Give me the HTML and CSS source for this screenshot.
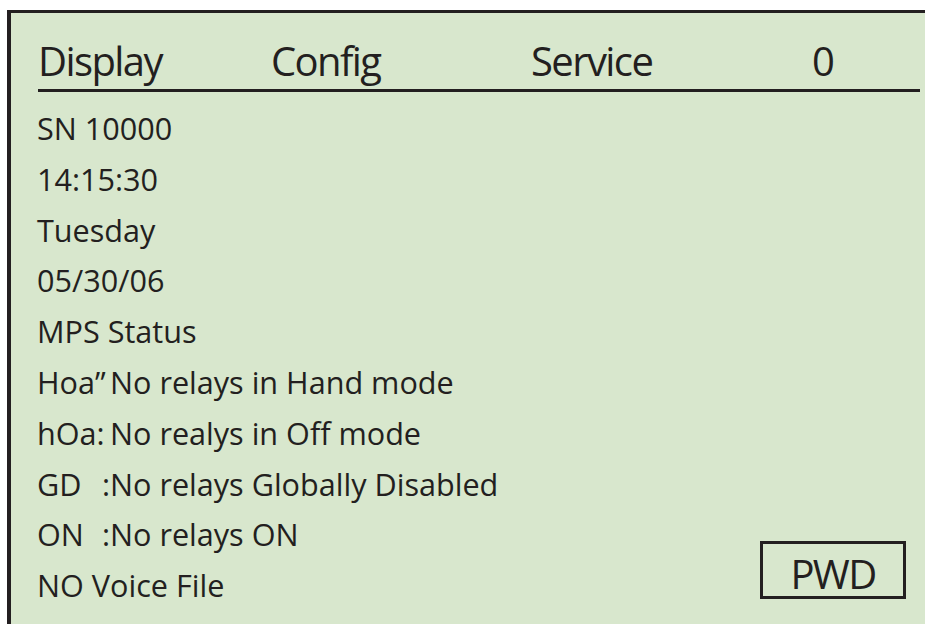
FILE: index.html
```html
<!DOCTYPE html>
<html>
<head>
  <title>MPS Display</title>
  <link rel="stylesheet" href="styles.css">
</head>
<body>

<div class="panel">
  <div class="tabs">
    <span class="tab">Display</span>
    <span class="tab">Config</span>
    <span class="tab">Service</span>
    <span class="tab">0</span>
  </div>

  <div class="lines">
    <div class="line">SN 10000</div>
    <div class="line">14:15:30</div>
    <div class="line">Tuesday</div>
    <div class="line">05/30/06</div>
    <div class="line">MPS Status</div>
    <div class="line"><span class="key">Hoa&rdquo;</span>No relays in Hand mode</div>
    <div class="line"><span class="key">hOa:</span>No realys in Off mode</div>
    <div class="line"><span class="key split">GD<span>:</span></span>No relays Globally Disabled</div>
    <div class="line"><span class="key split">ON<span>:</span></span>No relays ON</div>
    <div class="line">NO Voice File</div>
    <div class="pwd">PWD</div>
  </div>
</div>

</body>
</html>
```

FILE: styles.css
```css
body{
margin: 0;
background-color: white;
color: #231f20;
font-family: "Open Sans", "Noto Sans", sans-serif;
}
.panel{
box-sizing: border-box;
height: 614px;
margin: 10px 0 0 7px;
padding: 0 5px 0 0;
border-top: 3px solid #231f20;
border-left: 4px solid #231f20;
background-color: #d8e7cd;
}
.tabs{
display: grid;
grid-template-columns: 233px 260px 281px auto;
margin-left: 27px;
padding: 27px 0 7px 0;
border-bottom: 3px solid #231f20;
font-size: 40px;
letter-spacing: -1.6px;
line-height: 42px;
}
.lines{
display: grid;
grid-template-columns: 1fr auto;
grid-auto-rows: 50.8px;
margin: 11px 14px 0 26px;
font-size: 30.6px;
line-height: 50.8px;
}
.line{
grid-column: 1;
white-space: nowrap;
}
.key{
display: inline-block;
width: 73px;
}
.key.split{
display: inline-flex;
justify-content: space-between;
}
.pwd{
grid-column: 2;
grid-row: 9 / 11;
align-self: end;
width: 140px;
margin-bottom: 12px;
padding: 8px 0 0 0;
border: 3px solid #231f20;
font-size: 40px;
letter-spacing: -1.6px;
line-height: 44px;
text-align: center;
}
```
